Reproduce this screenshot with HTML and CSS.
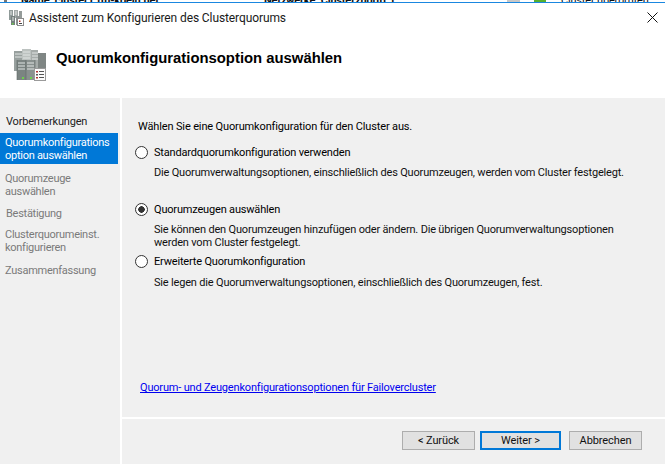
FILE: index.html
```html
<!DOCTYPE html>
<html lang="de">
<head>
<meta charset="utf-8">
<title>Assistent zum Konfigurieren des Clusterquorums</title>
<link rel="stylesheet" href="styles.css">
</head>
<body>
<div class="behind">
  <span class="b0"></span>
  <span class="b1">Name: cluster1.tfh-koeln.net</span>
  <span class="b2">Netzwerke: Clusterzugriff 1</span>
  <span class="b4"></span>
  <span class="b5"></span>
  <span class="b3">Cluster überprüfen</span>
</div>
<div class="window">
  <header class="titlebar">
    <svg class="title-icon" viewBox="0 0 16 16" width="16" height="16">
      <rect x="1" y="0" width="4" height="10" fill="#8f9a98"/><rect x="6" y="0" width="4" height="8" fill="#a3aaa8"/><rect x="11" y="1" width="3" height="7" fill="#959c9a"/>
      <rect x="3" y="6" width="4" height="9" fill="#75807e"/><rect x="8" y="6" width="4" height="9" fill="#8c9493"/>
      <path d="M2 2h2M2 4h2M7 2h2M7 4h2M4 8h2M4 10h2" stroke="#e4e8e7" stroke-width="1"/>
      <rect x="4" y="13" width="1.5" height="1.5" fill="#6ed04a"/>
      <rect x="9.5" y="8.5" width="6" height="7" fill="#fff" stroke="#8c8c8c" stroke-width="1"/>
      <rect x="11" y="10.5" width="1.5" height="1.5" fill="#b03030"/><rect x="11" y="13" width="3" height="1" fill="#444"/>
    </svg>
    <span class="title-text">Assistent zum Konfigurieren des Clusterquorums</span>
    <svg class="close" viewBox="0 0 11 11" width="11" height="11"><path d="M.5.5l10 10M10.5.5l-10 10" stroke="#111" stroke-width="1" fill="none"/></svg>
  </header>
  <div class="heading">
    <svg class="heading-icon" viewBox="0 0 32 32" width="32" height="32">
      <rect x="0" y="2" width="9" height="20" fill="#98a09e"/><rect x="8" y="0" width="9" height="20" fill="#bcc2c0"/><rect x="17" y="1" width="7" height="20" fill="#a6acaa"/><rect x="24" y="4" width="8" height="18" fill="#7f8684"/>
      <rect x="3" y="11" width="9" height="20" fill="#7b8482"/><rect x="12" y="11" width="9" height="20" fill="#89918f"/>
      <path d="M1 5h7M1 8h7M9 3h7M9 6h7M9 9h7M18 4h6M18 7h6M18 10h6M4 14h7M4 17h7M4 20h7M13 14h7M13 17h7M13 20h7" stroke="#e0e4e3" stroke-width="1"/>
      <path d="M12 11v20M21 11v20M3 11v20" stroke="#5f6866" stroke-width=".6"/>
      <rect x="8" y="28" width="2" height="2" fill="#6ed04a"/><rect x="16" y="28" width="2" height="2" fill="#6ed04a"/>
      <rect x="20.5" y="19.5" width="11" height="12" fill="#fbfbfb" stroke="#9a9a9a" stroke-width="1"/>
      <rect x="22" y="22" width="2" height="1.5" fill="#b03030"/><rect x="25" y="22" width="5" height="1" fill="#555"/>
      <rect x="22" y="25" width="2" height="1.5" fill="#555"/><rect x="25" y="25" width="5" height="1" fill="#555"/>
      <rect x="22" y="28" width="2" height="1.5" fill="#b03030"/><rect x="25" y="28" width="5" height="1" fill="#555"/>
    </svg>
    <h1 class="heading-text">Quorumkonfigurationsoption auswählen</h1>
  </div>
  <div class="body">
    <nav class="steps">
      <div class="step step-first">Vorbemerkungen</div>
      <div class="step step-active">Quorumkonfigurations<br>option auswählen</div>
      <div class="step step-dim">Quorumzeuge<br>auswählen</div>
      <div class="step step-dim step-one">Bestätigung</div>
      <div class="step step-dim step-wide">Clusterquorumeinst.<br>konfigurieren</div>
      <div class="step step-dim">Zusammenfassung</div>
    </nav>
    <main class="main">
      <div class="content">
        <p class="intro">Wählen Sie eine Quorumkonfiguration für den Cluster aus.</p>
        <div class="option opt-a">
          <div class="radio-row"><span class="radio"></span><span>Standardquorumkonfiguration verwenden</span></div>
          <p class="desc">Die Quorumverwaltungsoptionen, einschließlich des Quorumzeugen, werden vom Cluster festgelegt.</p>
        </div>
        <div class="option opt-b">
          <div class="radio-row"><span class="radio radio-on"></span><span>Quorumzeugen auswählen</span></div>
          <p class="desc">Sie können den Quorumzeugen hinzufügen oder ändern. Die übrigen Quorumverwaltungsoptionen<br>werden vom Cluster festgelegt.</p>
        </div>
        <div class="option opt-c">
          <div class="radio-row"><span class="radio"></span><span>Erweiterte Quorumkonfiguration</span></div>
          <p class="desc desc-low">Sie legen die Quorumverwaltungsoptionen, einschließlich des Quorumzeugen, fest.</p>
        </div>
        <a class="link" href="#">Quorum- und Zeugenkonfigurationsoptionen für Failovercluster</a>
      </div>
      <footer class="footer">
        <button class="btn" type="button">&lt; Zurück</button>
        <button class="btn btn-default" type="button">Weiter &gt;</button>
        <button class="btn" type="button">Abbrechen</button>
      </footer>
    </main>
  </div>
</div>
</body>
</html>
```

FILE: styles.css
```css
* { box-sizing: border-box; }
html, body { margin: 0; padding: 0; }
body {
  width: 665px;
  height: 464px;
  overflow: hidden;
  background: #fff;
  font-family: Roboto, "Noto Sans", sans-serif;
  font-size: 11px;
  letter-spacing: -0.18px;
  color: #000;
  display: flex;
  flex-direction: column;
}
.behind { height: 2px; overflow: hidden; background: #fff; flex: none; display: flex; line-height: 0; font-size: 11px; font-weight: 700; color: #111; padding-left: 4px; }
.behind span { flex: none; }
.b0 { width: 3px; height: 2px; background: #777; margin-right: 14px; }
.b1 { width: 243px; padding-top: 1px; }
.b2 { width: 243px; padding-top: 1px; }
.b4 { width: 13px; height: 2px; background: #c8c8c8; margin-right: 14px; }
.b5 { width: 12px; height: 2px; background: #55b030; margin-right: 15px; }
.b3 { padding-top: 1px; font-weight: 400; }
.window { flex: 1; display: flex; flex-direction: column; border-top: 1px solid #1a87e0; min-height: 0; }
.titlebar { height: 30px; display: flex; align-items: center; padding: 0 7px 0 8px; flex: none; }
.title-icon { margin-right: 5px; flex: none; }
.title-text { flex: 1; font-size: 12px; letter-spacing: -0.1px; color: #1a1a1a; }
.close { margin-bottom: 2px; }
.heading { height: 65px; display: flex; align-items: flex-start; padding: 16px 0 0 14px; flex: none; }
.heading-icon { margin-right: 10px; flex: none; }
.heading-text { margin: 0; font-family: "Liberation Sans", sans-serif; font-size: 14.85px; letter-spacing: 0; line-height: 18px; font-weight: 700; }
.body { flex: 1; display: flex; gap: 2px; min-height: 0; }
.steps { width: 120px; background: #f0f0f0; padding: 17px 2px 0 0; flex: none; letter-spacing: -0.27px; }
.step { padding: 0 5px; line-height: 13px; margin-bottom: 9px; color: #222; }
.step-first { margin: 0 0 5px; padding-left: 6px; letter-spacing: -0.18px; }
.step-active { background: #0078d7; color: #fff; height: 31px; padding: 3px 5px 0; margin-bottom: 8px; }
.step-dim { color: #7a7a7a; }
.step-one { margin-bottom: 8px; padding-left: 6px; }
.step-wide { margin-bottom: 10px; }
.main { flex: 1; display: flex; flex-direction: column; background: #f0f0f0; }
.content { flex: 1; padding: 21px 16px 0 13px; display: flex; flex-direction: column; }
.intro { margin: 0 0 11px 3px; line-height: 15px; letter-spacing: -0.14px; }
.radio-row { display: flex; align-items: center; gap: 6px; height: 15px; }
.radio { width: 13px; height: 13px; border: 1px solid #333; border-radius: 50%; background: #fff; flex: none; }
.radio-on { background: radial-gradient(circle, #333 0 3px, #fff 3.5px); }
.desc { margin: 6px 0 0 19px; line-height: 13px; color: #111; }
.desc-low { margin-top: 7px; }
.opt-a { height: 57px; }
.opt-b { height: 52px; }
.opt-c { height: 126px; }
.link { color: #0000f0; text-decoration: underline; line-height: 15px; margin-left: 5px; }
.footer { height: 47px; border-top: 2px solid #fff; display: flex; align-items: flex-start; padding: 12px 23px 0 0; justify-content: flex-end; flex: none; }
.btn { width: 73px; height: 19px; padding: 0; border: 1px solid #adadad; background: #e1e1e1; font: inherit; letter-spacing: -0.1px; color: #111; }
.btn-default { width: 81px; border: 2px solid #0078d7; margin: 0 8px 0 5px; }
```
